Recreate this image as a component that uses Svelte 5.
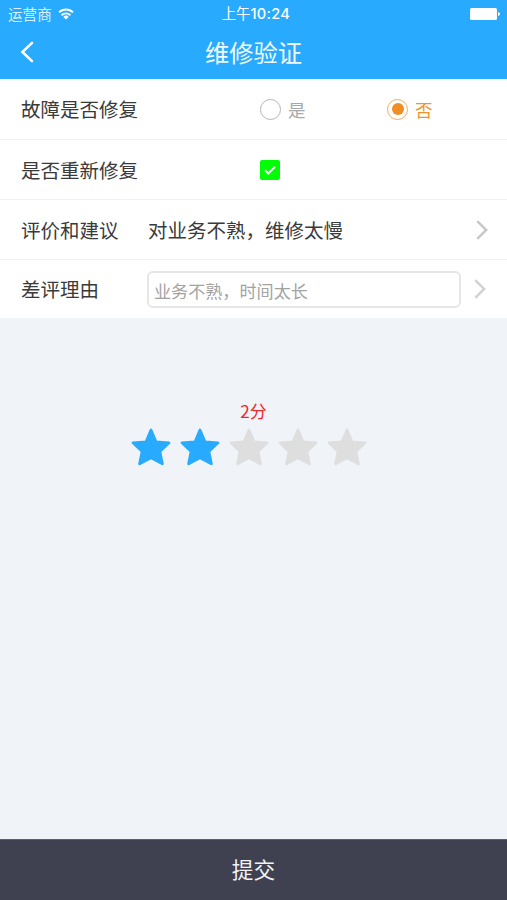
<script lang="ts">
  let fixed = $state(false);
  let redo = $state(true);
  let score = $state(2);
  let reason = $state("");

  const stars = [1, 2, 3, 4, 5];
</script>

{#snippet arrow()}
  <svg class="arrow" viewBox="0 0 12 20" width="12" height="20">
    <path d="M1.3 1.2 10.2 10 1.3 18.8" fill="none" stroke="currentColor" stroke-width="2.5" />
  </svg>
{/snippet}

<div class="page">
  <header>
    <div class="status">
      <div class="carrier">
        <span>运营商</span>
        <svg viewBox="0 0 16 12" width="16" height="12">
          <path d="M1 4.4a10 10 0 0 1 14 0M3.6 7.2a6.3 6.3 0 0 1 8.8 0" fill="none" stroke="#fff" stroke-width="1.9" />
          <path d="M8 11.6 5.3 8.9a3.9 3.9 0 0 1 5.4 0Z" fill="#fff" />
        </svg>
      </div>
      <span class="time">上午<b>10:24</b></span>
      <svg class="battery" viewBox="0 0 30 12" width="30" height="12">
        <rect width="27" height="12" rx="1.6" fill="#fff" />
        <path d="M28 4q2 .3 2 2t-2 2Z" fill="#fff" />
      </svg>
    </div>
    <div class="nav">
      <button class="back" aria-label="返回">
        <svg viewBox="0 0 14 22" width="14" height="22">
          <path d="M12 1.8 2.4 11 12 20.2" fill="none" stroke="#fff" stroke-width="2.5" stroke-linecap="round" />
        </svg>
      </button>
      <h1>维修验证</h1>
    </div>
  </header>

  <section class="form">
    <div class="row first">
      <span class="label wide">故障是否修复</span>
      <button class="radio" class:on={fixed} onclick={() => (fixed = true)}>
        <i></i><span>是</span>
      </button>
      <button class="radio" class:on={!fixed} onclick={() => (fixed = false)}>
        <i></i><span>否</span>
      </button>
    </div>
    <div class="row">
      <span class="label wide">是否重新修复</span>
      <button class="check" class:on={redo} aria-label="是否重新修复" onclick={() => (redo = !redo)}>
        <svg viewBox="0 0 20 20" width="20" height="20">
          <path d="m5 10.3 3.3 3.2 6.7-6.7" fill="none" stroke="#e9ffe9" stroke-width="2" />
        </svg>
      </button>
    </div>
    <div class="row">
      <span class="label">评价和建议</span>
      <span class="value">对业务不熟，维修太慢</span>
      {@render arrow()}
    </div>
    <div class="row last">
      <span class="label">差评理由</span>
      <input bind:value={reason} placeholder="业务不熟，时间太长" />
      {@render arrow()}
    </div>
  </section>

  <section class="rating">
    <div class="score">{score}分</div>
    <div class="stars">
      {#each stars as n}
        <button class="star" class:on={n <= score} aria-label="{n}分" onclick={() => (score = n)}>
          <svg viewBox="0 0 40 38" width="40" height="38">
            <path
              d="M20 2 25 13.8 38 14.8 28.8 23.4 31.4 35.8 20 29.8 8.6 35.8 11.2 23.4 2 14.8 15 13.8Z"
              fill="currentColor" stroke="currentColor" stroke-width="2.8" stroke-linejoin="round"
            />
          </svg>
        </button>
      {/each}
    </div>
  </section>

  <button class="submit">提交</button>
</div>

<style>
  :global(body) { margin: 0; }

  .page {
    display: flex; flex-direction: column;
    width: 507px; height: 900px;
    background: #f0f3f7; color: #3a3a3a;
    font-family: "Noto Sans CJK SC", sans-serif;
  }
  button {
    padding: 0; border: none; background: none;
    font-family: inherit; cursor: pointer;
  }
  svg { display: block; }

  header { height: 79px; background: #28abff; color: #fff; }
  .status {
    display: grid; grid-template-columns: 1fr auto 1fr; align-items: center;
    height: 27px; padding: 0 7px 0 8px;
    font-size: 14.6px; line-height: 26px;
  }
  .carrier { display: flex; align-items: center; gap: 6px; color: #d9f0ff; }
  .time { padding-left: 4px; font-size: 14.3px; }
  .time b { font-family: Inter, sans-serif; font-size: 14.6px; font-weight: 500; letter-spacing: .3px; }
  .battery { justify-self: end; }

  .nav {
    display: grid; grid-template-columns: 60px 1fr 60px; align-items: center;
    height: 50px;
  }
  .back { padding-left: 20px; }
  h1 { margin: 0; color: #f0faff; font-size: 24.3px; font-weight: 400; line-height: 50px; text-align: center; }

  .form { background: #fff; }
  .row {
    display: flex; align-items: center;
    box-sizing: border-box; height: 60px;
    padding: 0 19px 0 21px;
    border-bottom: 1px solid #f1f1f2;
    font-size: 19.5px; line-height: 28px;
  }
  .row.first { height: 61px; }
  .row.last { height: 58px; padding: 0 20px 0 21px; border-bottom: none; }
  .label { flex: none; width: 127px; }
  .label.wide { width: 239px; }
  .value { flex: 1; }
  .arrow { flex: none; color: #c8c8cb; }
  .row.last .arrow { color: #d2d2d4; }

  .radio {
    display: flex; align-items: center; gap: 7px;
    width: 127px; color: #a8a8a8; font-size: 17.5px;
  }
  .radio:last-child { width: auto; }
  .radio i {
    display: flex; align-items: center; justify-content: center;
    box-sizing: border-box; width: 21px; height: 21px;
    border: 1.5px solid #b5b5b5; border-radius: 50%;
  }
  .radio.on { color: #ee942e; }
  .radio.on i { border-color: #efac61; }
  .radio.on i::after {
    content: ""; width: 12px; height: 12px;
    border-radius: 50%; background: #ef8e22;
  }

  .check { width: 20px; height: 20px; border-radius: 2px; background: #ddd; }
  .check.on { background: #00ff04; }

  input {
    box-sizing: border-box; width: 314px; height: 37px;
    margin: 0 13px 0 -1px; padding: 2px 5px 0;
    border: 2px solid #e6e6e6; border-radius: 6px;
    outline: none; background: #fff; color: #333;
    font-family: inherit; font-size: 17.1px;
  }
  input::placeholder { color: #a3a3a3; opacity: 1; }

  .rating {
    flex: 1; display: flex; flex-direction: column; align-items: center;
    padding-top: 81px;
  }
  .score { color: #ed2929; font-size: 17px; line-height: 24px; }
  .stars { display: flex; gap: 9px; margin: 5px 9px 0 0; }
  .star { color: #dededf; }
  .star.on { color: #28abff; }

  .submit {
    height: 61px; padding-bottom: 3px; background: #404150;
    border-top: 1px solid #5d5e6b;
    color: #f3f3f7; font-size: 21.7px;
  }
</style>
